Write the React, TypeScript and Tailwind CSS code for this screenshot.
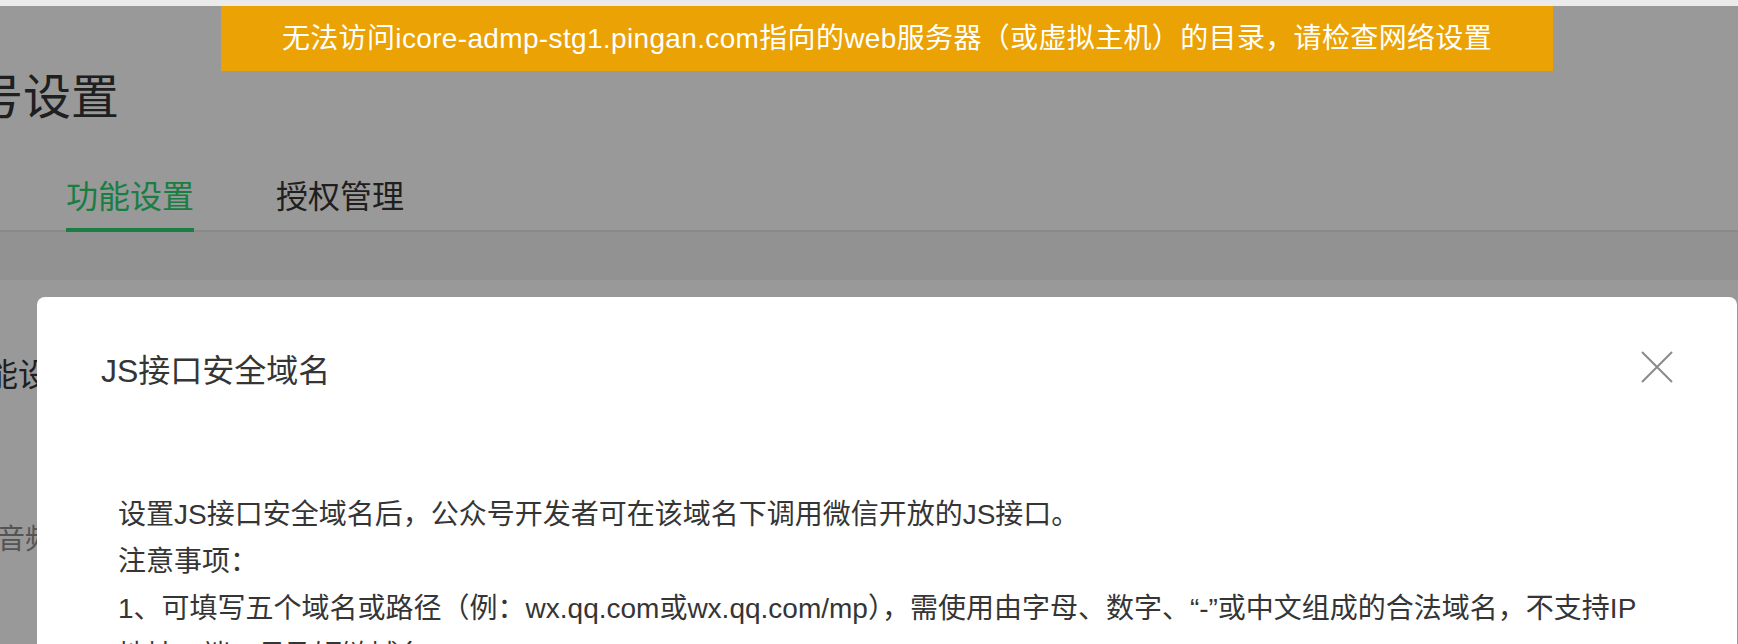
import React from "react";

const tabs = [
  { id: 1, name: "功能设置" },
  { id: 2, name: "授权管理" },
];

const CloseIcon = () => (
  <svg width="32" height="32" viewBox="0 0 32 32" fill="none">
    <path d="M1 1L31 31M31 1L1 31" stroke="#8a8a8a" strokeWidth="2" />
  </svg>
);

export default function App() {
  const selectedTab = "功能设置";

  return (
    <main className="relative h-[644px] w-full overflow-hidden bg-white font-['Liberation_Sans','Noto_Sans_CJK_SC',sans-serif] text-[#353535]">
      <div className="h-[6px] bg-[#ebebeb]" />

      {/* page behind the dialog */}
      <section className="flex flex-col">
        <h1 className="mt-[68px] ml-[-121px] whitespace-nowrap text-[48px] leading-[48px] font-normal">
          公众号设置
        </h1>

        <div className="mt-[59px] flex gap-[82px] border-b-2 border-[#e6e6e6] pl-[66px]">
          {tabs.map((tab) => (
            <div
              key={tab.id}
              className={`-mb-[2px] border-b-4 pb-[15px] text-[32px] leading-[32px] ${
                selectedTab === tab.name
                  ? "border-[#2dd16e] text-[#2dd16e]"
                  : "border-transparent text-[#353535]"
              }`}
            >
              {tab.name}
            </div>
          ))}
        </div>

        <div className="h-[48px] bg-[#f3f4f3]" />

        <article className="flex h-[400px] flex-col bg-white">
          <h2 className="mt-[79px] ml-[-46px] whitespace-nowrap text-[32px] leading-[32px] font-normal">
            功能设置
          </h2>
          <p className="mt-[135px] ml-[-3px] whitespace-nowrap text-[28px] leading-[28px] text-[#8c8c8c]">
            音频消息
          </p>
        </article>
      </section>

      <div className="absolute inset-x-0 top-[6px] bottom-0 bg-black/40" />

      <div className="absolute left-[221px] top-[6px] flex h-[65px] w-[1332px] items-center justify-center bg-[#eba204] text-[28px] leading-[28px] tracking-[0.35px] text-white whitespace-nowrap">
        无法访问icore-admp-stg1.pingan.com指向的web服务器（或虚拟主机）的目录，请检查网络设置
      </div>

      {/* dialog */}
      <div className="absolute left-[37px] right-[1px] top-[297px] h-[420px] rounded-[8px] bg-white">
        <header className="flex items-start justify-between px-[64px] pt-[54px]">
          <h3 className="mt-[4px] text-[32px] leading-[32px] font-normal">JS接口安全域名</h3>
          <button className="h-[32px] w-[32px]">
            <CloseIcon />
          </button>
        </header>
        <div className="mt-[104px] px-[81px] text-[28px] leading-[47px]">
          <p>设置JS接口安全域名后，公众号开发者可在该域名下调用微信开放的JS接口。</p>
          <p>注意事项：</p>
          <p>
            1、可填写五个域名或路径（例：wx.qq.com或wx.qq.com/mp），需使用由字母、数字、“-”或中文组成的合法域名，不支持IP地址、端口号及短链域名。
          </p>
        </div>
      </div>
    </main>
  );
}
